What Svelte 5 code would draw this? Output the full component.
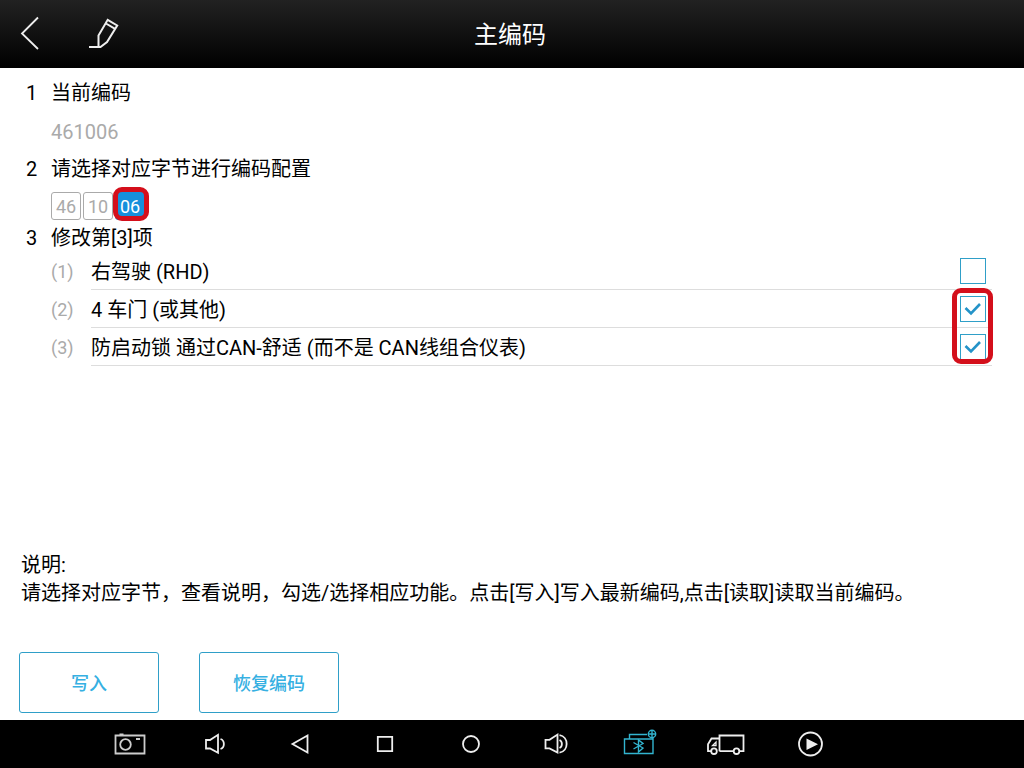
<script>
    const bytes = ["46", "10", "06"];
    let selected = $state(2);

    let options = $state([
        { label: "右驾驶 (RHD)", checked: false },
        { label: "4 车门 (或其他)", checked: true },
        { label: "防启动锁 通过CAN-舒适 (而不是 CAN线组合仪表)", checked: true },
    ]);
</script>

<div class="screen">
    <header>
        <div class="tools">
            <button type="button" aria-label="返回">
                <svg width="60" height="68" viewBox="0 0 60 68">
                    <path d="M38 17.5 22 33.5l16 15.5" stroke-width="1.8" />
                </svg>
            </button>
            <button type="button" aria-label="编辑">
                <svg width="60" height="68" viewBox="0 0 60 68">
                    <path d="M29 47h11.500l6.500-5 10.200-16.500-9.500-5.700-9.200 15.700V47M46 23.500l9.500 5.600" stroke-width="2" />
                </svg>
            </button>
        </div>
        <h1>主编码</h1>
    </header>

    <main>
        <section>
            <h2><span class="num">1</span>当前编码</h2>
            <p class="current">461006</p>
        </section>

        <section>
            <h2 class="second"><span class="num">2</span>请选择对应字节进行编码配置</h2>
            <div class="bytes">
                {#each bytes as byte, i}
                    <button type="button" class="byte" class:active={i === selected} onclick={() => (selected = i)}>{byte}</button>
                {/each}
            </div>
        </section>

        <section>
            <h2 class="third"><span class="num">3</span>修改第[{selected + 1}]项</h2>
            <ul>
                {#each options as option, i}
                    <li>
                        <span class="index">({i + 1})</span>
                        <div class="option">
                            <label for="option-{i}">{option.label}</label>
                            <span class="box">
                                <input id="option-{i}" type="checkbox" bind:checked={option.checked} />
                                {#if option.checked}
                                    <svg width="26" height="26" viewBox="0 0 26 26">
                                        <path d="M5.500 12l5.500 5.500 9-9.500" />
                                    </svg>
                                {/if}
                            </span>
                        </div>
                    </li>
                {/each}
            </ul>
        </section>

        <div class="note">
            <p>说明:</p>
            <p>请选择对应字节，查看说明，勾选/选择相应功能。点击[写入]写入最新编码,点击[读取]读取当前编码。</p>
        </div>

        <div class="actions">
            <button type="button">写入</button>
            <button type="button">恢复编码</button>
        </div>
    </main>

    <nav>
        <button type="button" aria-label="截图">
            <svg class="camera" viewBox="0 0 45 48">
                <path d="M8.500 15.500h29v18h-29zM12.500 14.500h4M29 19h4" />
                <circle cx="18.500" cy="24.500" r="5.300" />
            </svg>
        </button>
        <button type="button" aria-label="音量减">
            <svg viewBox="0 0 45 48">
                <path d="M14 20h4l8-5.200v18L18 28.500h-4zM28.500 19c4.500 1.500 4.500 8.500 0 10" />
            </svg>
        </button>
        <button type="button" aria-label="后退">
            <svg viewBox="0 0 45 48">
                <path d="M30.500 15.500v17L15.500 24z" />
            </svg>
        </button>
        <button type="button" aria-label="最近任务">
            <svg viewBox="0 0 45 48">
                <path d="M15.800 16.800h14.400v14.400H15.800z" />
            </svg>
        </button>
        <button type="button" aria-label="主页">
            <svg viewBox="0 0 45 48">
                <circle cx="23" cy="24" r="8" />
            </svg>
        </button>
        <button type="button" aria-label="音量加">
            <svg viewBox="0 0 45 48">
                <path d="M12.500 19.800h4l8-5.200v18l-8-4.200h-4zM26.500 20c3.200 1.500 3.200 6.500 0 8M26.500 15.200c9.500 1.500 9.500 16 0 17.500" />
            </svg>
        </button>
        <button type="button" aria-label="蓝牙">
            <svg class="bluetooth" viewBox="0 0 45 48">
                <path d="M6.500 19h28.500v14.500h-28.500zM11.500 19v-4.500h17.500M35 19v-2" />
                <path d="M15.500 22.500l9.500 5.500-4.500 4V20l4.500 3.500-9.500 5.500" />
                <circle cx="34" cy="14" r="3.700" />
                <path d="M34 10v8M30 14h8" />
            </svg>
        </button>
        <button type="button" aria-label="车辆">
            <svg viewBox="0 0 45 48">
                <path d="M11.500 31.200h-6.500v-7l3.500-5.700h8M16.500 31.200V15.500h24v15.700h-4M16.500 31.200h14.500" />
                <path d="M13 22v3.500H9.500z" stroke-width="1.3" />
                <circle cx="11" cy="31.200" r="2.800" fill="#000" />
                <circle cx="33.500" cy="31.200" r="2.800" fill="#000" />
            </svg>
        </button>
        <button type="button" aria-label="播放">
            <svg viewBox="0 0 45 48">
                <circle cx="22.500" cy="24" r="11.500" />
                <path class="solid" d="M18.500 18.500v11.500l11.500-5.700z" />
            </svg>
        </button>
    </nav>
</div>

<style>
    :global(body) {
        margin: 0;
        background: #fff;
    }
    .screen {
        display: flex;
        flex-direction: column;
        min-height: 100vh;
        font-family: Roboto, "Noto Sans CJK SC", sans-serif;
        font-size: 20px;
        color: #000;
    }
    h1, h2, p, ul {
        margin: 0;
        padding: 0;
        font-weight: 400;
    }
    button {
        margin: 0;
        padding: 0;
        border: 0;
        background: none;
        font-family: inherit;
        cursor: pointer;
    }
    svg {
        display: block;
        fill: none;
        stroke: #eee;
    }

    header {
        display: grid;
        grid-template-columns: 1fr auto 1fr;
        align-items: center;
        height: 68px;
        padding-right: 4px;
        background: linear-gradient(#222, #000);
    }
    .tools {
        display: flex;
    }
    h1 {
        padding-top: 2px;
        color: #fff;
        font-size: 24px;
        line-height: 32px;
    }

    main {
        display: flex;
        flex-direction: column;
        flex: 1;
        padding: 4px 32px 7px 19px;
    }
    h2 {
        display: flex;
        padding-left: 7px;
        font-size: 20px;
        line-height: 42px;
    }
    .second {
        line-height: 38px;
    }
    .third {
        line-height: 28px;
    }
    .num {
        width: 25px;
    }
    .current {
        padding-left: 32px;
        line-height: 36px;
        color: #aaa;
    }

    .bytes {
        display: flex;
        gap: 2px;
        padding: 4px 0 4px 32px;
    }
    .byte {
        position: relative;
        box-sizing: border-box;
        width: 30px;
        height: 28px;
        padding-top: 2px;
        border: 1px solid #aaa;
        border-radius: 3px;
        color: #aaa;
        font-size: 18px;
        line-height: 24px;
    }
    .active {
        border-color: #1590dc;
        background: #1590dc;
        color: #fff;
    }
    .active::after {
        content: "";
        position: absolute;
        inset: -6px -5px -2px -3px;
        border: 5px solid #d40f1b;
        border-radius: 9px;
    }

    ul {
        position: relative;
        padding-left: 32px;
        list-style: none;
    }
    /* frame round the two ticked boxes */
    ul::after {
        content: "";
        position: absolute;
        top: 36px;
        right: -1px;
        box-sizing: border-box;
        width: 41px;
        height: 76px;
        border: 5px solid #d40f1b;
        border-radius: 9px;
        pointer-events: none;
    }
    li {
        display: flex;
        height: 38px;
    }
    .index {
        width: 40px;
        color: #aaa;
        font-size: 18px;
        line-height: 40px;
    }
    .option {
        display: flex;
        flex: 1;
        align-items: center;
        justify-content: space-between;
        box-sizing: border-box;
        height: 38px;
        padding-right: 6px;
        border-bottom: 1px solid #ddd;
    }
    .option label {
        padding-top: 2px;
        line-height: 32px;
    }
    .box {
        display: grid;
    }
    .box input,
    .box svg {
        grid-area: 1 / 1;
    }
    .box input {
        appearance: none;
        box-sizing: border-box;
        width: 26px;
        height: 26px;
        margin: 0;
        border: 1px solid #2f9fc8;
    }
    .box svg {
        stroke: #2493c8;
        stroke-width: 2.6;
        pointer-events: none;
    }

    .note {
        margin-top: auto;
        padding: 24px 0 45px 2px;
        line-height: 28px;
    }
    .actions {
        display: flex;
        gap: 40px;
    }
    .actions button {
        box-sizing: border-box;
        width: 140px;
        height: 61px;
        padding-bottom: 2px;
        border: 1px solid #2f9fc8;
        border-radius: 3px;
        color: #36b0e2;
        font-size: 18px;
        font-weight: 500;
    }

    nav {
        display: grid;
        grid-template-columns: repeat(9, 1fr);
        height: 48px;
        padding: 0 16.7% 0 8.5%;
        background: #000;
    }
    nav button {
        display: flex;
        justify-content: center;
    }
    nav svg {
        width: 45px;
        height: 48px;
        stroke-width: 1.8;
    }
    .camera {
        stroke: #ccc;
    }
    .bluetooth {
        stroke: #32b4cf;
        stroke-width: 1.4;
    }
    .solid {
        fill: #eee;
        stroke: none;
    }
</style>
